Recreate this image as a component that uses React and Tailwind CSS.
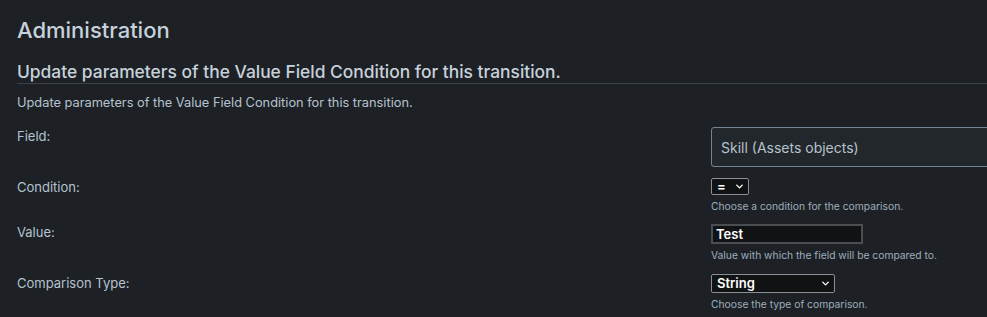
import React from 'react';
import { ChevronDown } from 'lucide-react';

// Native-looking small select used in the legacy admin form
function MiniSelect({ value, width, height = 'h-[17px]' }) {
  return (
    <div className={`flex items-center justify-between ${height} ${width} bg-[#111214] border border-[#8a8d92] rounded-[2px] pl-[5px] pr-[3px] text-[13px] font-semibold text-white leading-none`}>
      <span>{value}</span>
      <ChevronDown size={11} strokeWidth={3} className="text-white" />
    </div>
  );
}

function Row({ label, children, className = '' }) {
  return (
    <div className={`grid grid-cols-[694px_1fr] ${className}`}>
      <div className="text-[13px] leading-[16px] text-[#b6c2cf]">{label}</div>
      <div>{children}</div>
    </div>
  );
}

function Help({ children }) {
  return <div className="text-[10.3px] text-[#9fadbc] mt-[6px] leading-[10px]">{children}</div>;
}

export default function App() {
  return (
    <div
      className="w-[987px] h-[317px] overflow-hidden bg-[#1d2125] pl-[17px] pt-[16px]"
      style={{ fontFamily: 'Inter, "Noto Sans", sans-serif' }}
    >
      <h1 className="text-[22px] leading-[28px] text-[#c7d1db] font-medium">Administration</h1>

      <h2 className="mt-[17px] text-[17.4px] leading-[22px] text-[#c7d1db] font-medium border-b border-[#3b4148]">
        Update parameters of the Value Field Condition for this transition.
      </h2>

      <p className="mt-[11px] text-[12.8px] leading-[16px] text-[#b6c2cf]">
        Update parameters of the Value Field Condition for this transition.
      </p>

      <div className="mt-[16px]">
        <Row label={<span className="block pt-[1px]">Field:</span>}>
          <div className="h-[40px] w-[320px] bg-[#22272b] border border-[#738496] rounded-[3px] flex items-center pl-[9px] text-[14px] text-[#b6c2cf]">
            Skill (Assets objects)
          </div>
        </Row>

        <Row label={<span className="block pt-[1px]">Condition:</span>} className="mt-[11px]">
          <MiniSelect value="=" width="w-[38px]" />
          <Help>Choose a condition for the comparison.</Help>
        </Row>

        <Row label={<span className="block pt-[0px]">Value:</span>} className="mt-[13px]">
          <div className="h-[20px] w-[152px] bg-[#111214] border-2 border-[#4a4d52] pl-[3px] text-[13px] font-semibold text-white leading-[16px]">
            Test
          </div>
          <Help>Value with which the field will be compared to.</Help>
        </Row>

        <Row label={<span className="block pt-[1px]">Comparison Type:</span>} className="mt-[14px]">
          <MiniSelect value="String" width="w-[124px]" height="h-[19px]" />
          <Help>Choose the type of comparison.</Help>
        </Row>
      </div>
    </div>
  );
}
